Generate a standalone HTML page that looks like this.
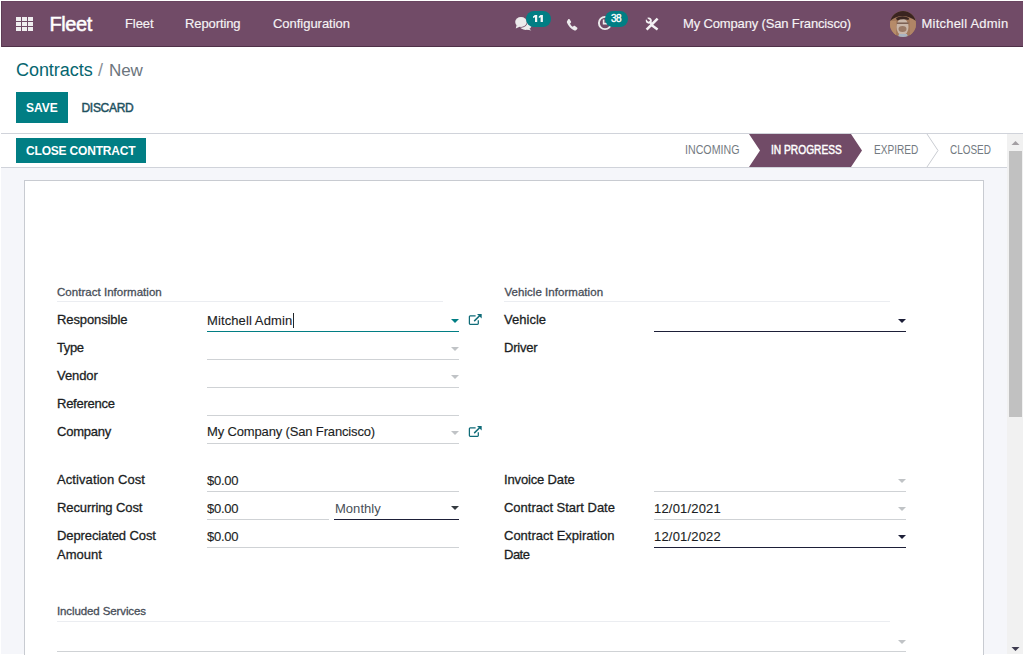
<!DOCTYPE html>
<html><head><meta charset="utf-8"><style>
html,body{margin:0;padding:0;}
body{width:1024px;height:655px;overflow:hidden;position:relative;background:#fff;font-family:"Liberation Sans", sans-serif;}
</style></head><body>
<div style="position:absolute;left:1px;top:1px;width:1022px;height:46px;background:#714B67;"></div>
<div style="position:absolute;left:1px;top:46px;width:1022px;height:1px;background:#4f3148;"></div>
<div style="position:absolute;left:1px;top:1px;width:1022px;height:1px;background:#6a4460;"></div>
<div style="position:absolute;left:1px;top:1px;width:1px;height:46px;background:#5e3d56;"></div>
<div style="position:absolute;left:16px;top:17px;width:5px;height:4px;background:#f0eef0;"></div>
<div style="position:absolute;left:16px;top:22px;width:5px;height:4px;background:#f0eef0;"></div>
<div style="position:absolute;left:16px;top:27px;width:5px;height:4px;background:#f0eef0;"></div>
<div style="position:absolute;left:22px;top:17px;width:5px;height:4px;background:#f0eef0;"></div>
<div style="position:absolute;left:22px;top:22px;width:5px;height:4px;background:#f0eef0;"></div>
<div style="position:absolute;left:22px;top:27px;width:5px;height:4px;background:#f0eef0;"></div>
<div style="position:absolute;left:28px;top:17px;width:5px;height:4px;background:#f0eef0;"></div>
<div style="position:absolute;left:28px;top:22px;width:5px;height:4px;background:#f0eef0;"></div>
<div style="position:absolute;left:28px;top:27px;width:5px;height:4px;background:#f0eef0;"></div>
<div style="position:absolute;left:49.5px;top:13.67px;font-size:20px;line-height:20px;color:#fff;font-weight:normal;letter-spacing:-0.4px;white-space:nowrap;-webkit-text-stroke:0.5px #fff;">Fleet</div>
<div style="position:absolute;left:125px;top:17.00px;font-size:13px;line-height:13px;color:#f6f3f5;font-weight:normal;letter-spacing:-0.1px;white-space:nowrap;-webkit-text-stroke:0.15px currentColor;">Fleet</div>
<div style="position:absolute;left:185px;top:17.00px;font-size:13px;line-height:13px;color:#f6f3f5;font-weight:normal;letter-spacing:-0.1px;white-space:nowrap;-webkit-text-stroke:0.15px currentColor;">Reporting</div>
<div style="position:absolute;left:273px;top:17.00px;font-size:13px;line-height:13px;color:#f6f3f5;font-weight:normal;letter-spacing:-0.03px;white-space:nowrap;-webkit-text-stroke:0.15px currentColor;">Configuration</div>
<div style="position:absolute;left:683px;top:17.00px;font-size:13px;line-height:13px;color:#f6f3f5;font-weight:normal;letter-spacing:-0.15px;white-space:nowrap;-webkit-text-stroke:0.15px currentColor;">My Company (San Francisco)</div>
<div style="position:absolute;left:921.5px;top:17.00px;font-size:13px;line-height:13px;color:#f6f3f5;font-weight:normal;letter-spacing:0.22px;white-space:nowrap;-webkit-text-stroke:0.15px currentColor;">Mitchell Admin</div>
<svg style="position:absolute;left:514px;top:16px" width="18" height="15" viewBox="0 0 18 15">
<ellipse cx="11.6" cy="10.3" rx="5.6" ry="3.6" fill="#ecebec"/>
<polygon points="14.5,12 17.3,14.6 12.5,13.6" fill="#ecebec"/>
<ellipse cx="7" cy="6" rx="6.6" ry="5.8" fill="#714B67"/>
<ellipse cx="7" cy="6" rx="5.8" ry="5" fill="#ecebec"/>
<polygon points="2.6,9 1.8,12.6 6.2,10.6" fill="#ecebec"/>
</svg>
<div style="position:absolute;left:526px;top:11px;width:25px;height:16px;background:#017e84;border-radius:8px;"></div>
<svg style="position:absolute;left:532px;top:14px" width="12" height="9" viewBox="0 0 12 9">
<polygon points="2.9,1 5.2,1 5.2,8 3,8 3,3.3 1,3.9 1,2.6" fill="#f4f8f8"/>
<polygon points="8.5,1 10.9,1 10.9,8 8.6,8 8.6,3.3 6.8,3.9 6.8,2.6" fill="#f4f8f8"/>
</svg>
<svg style="position:absolute;left:566px;top:17.5px" width="13" height="13" viewBox="0 0 13 13">
<path d="M2.2 1.2c.5-.4 1.2-.3 1.5.2l1.3 2c.3.5.2 1.1-.2 1.4l-.8.6c.5 1.3 1.6 2.6 2.9 3.4l.7-.7c.4-.4 1-.4 1.4-.1l2 1.4c.5.3.6 1 .2 1.5l-.9 1c-.6.6-1.5.8-2.3.4C5 10.8 2.3 8 1 4.7.7 3.9.9 3 1.5 2.4z" fill="#ecebec"/>
</svg>
<svg style="position:absolute;left:597px;top:15px" width="16" height="16" viewBox="0 0 16 16">
<circle cx="8" cy="8" r="6.1" fill="none" stroke="#ecebec" stroke-width="1.9"/>
<path d="M6.6 4.6V8.6H10.5" fill="none" stroke="#ecebec" stroke-width="1.6"/>
</svg>
<div style="position:absolute;left:605px;top:11px;width:23px;height:16px;background:#017e84;border-radius:8px;"></div>
<div style="position:absolute;left:611px;top:13.54px;font-size:10px;line-height:10px;color:#fff;font-weight:normal;letter-spacing:-0.5px;white-space:nowrap;-webkit-text-stroke:0.35px #fff;">38</div>
<svg style="position:absolute;left:644px;top:16px" width="16" height="16" viewBox="0 0 16 16">
<path d="M2.6 13.6L13.6 2.6" stroke="#f4f2f4" stroke-width="2.5"/>
<path d="M7.5 9L13.6 13.4" stroke="#f4f2f4" stroke-width="2.5"/>
<circle cx="4.8" cy="4.6" r="2.1" fill="none" stroke="#f4f2f4" stroke-width="1.9"/>
<path d="M2.2 2.2L4.6 4.6" stroke="#714B67" stroke-width="1.8"/>
<path d="M5.5 5.6L8.5 9" stroke="#f4f2f4" stroke-width="2.2"/>
</svg>
<svg style="position:absolute;left:890px;top:11px" width="26" height="26" viewBox="0 0 26 26">
<defs><clipPath id="av"><circle cx="13" cy="13" r="13"/></clipPath></defs>
<g clip-path="url(#av)">
<rect width="26" height="26" fill="#a47a5c"/>
<rect x="0" y="10" width="6" height="16" fill="#b68b69"/>
<rect x="20" y="8" width="6" height="18" fill="#b08566"/>
<path d="M0 0H26V10Q19 5 12.5 5Q6 5 0 10z" fill="#3a2420"/>
<ellipse cx="12.5" cy="16" rx="6" ry="8.5" fill="#c9b6a8"/>
<path d="M6 7Q12.5 3.5 19 7L18.5 9Q12.5 7.5 7 9.5z" fill="#3a2622"/>
<rect x="7" y="11.5" width="11.5" height="1.4" fill="#74584b"/>
<ellipse cx="12.5" cy="18" rx="4" ry="3" fill="#9a7a66"/>
<path d="M9 23H17L18 26H8z" fill="#a9b4c2"/>
</g></svg>
<div style="position:absolute;left:16px;top:60.76px;font-size:18px;line-height:18px;color:#06666f;font-weight:normal;letter-spacing:-0.05px;white-space:nowrap;">Contracts</div>
<div style="position:absolute;left:98px;top:60.76px;font-size:18px;line-height:18px;color:#8a9096;font-weight:normal;letter-spacing:0px;white-space:nowrap;">/</div>
<div style="position:absolute;left:109px;top:61.61px;font-size:17px;line-height:17px;color:#6c757d;font-weight:normal;letter-spacing:-0.15px;white-space:nowrap;">New</div>
<div style="position:absolute;left:16px;top:92px;width:52px;height:31px;background:#017e84;"></div>
<div style="position:absolute;left:26px;top:101.84px;font-size:12px;line-height:12px;color:#fff;font-weight:bold;letter-spacing:0px;white-space:nowrap;">SAVE</div>
<div style="position:absolute;left:81.5px;top:101.84px;font-size:12px;line-height:12px;color:#1e5160;font-weight:normal;letter-spacing:-0.3px;white-space:nowrap;-webkit-text-stroke:0.45px currentColor;">DISCARD</div>
<div style="position:absolute;left:1px;top:133px;width:1022px;height:1px;background:#d0d3da;"></div>
<div style="position:absolute;left:1px;top:167px;width:1006px;height:1px;background:#d0d3da;"></div>
<div style="position:absolute;left:16px;top:138px;width:130px;height:25px;background:#017e84;"></div>
<div style="position:absolute;left:26px;top:144.84px;font-size:12px;line-height:12px;color:#fff;font-weight:bold;letter-spacing:-0.18px;white-space:nowrap;">CLOSE CONTRACT</div>
<svg style="position:absolute;left:740px;top:134px" width="270" height="33" viewBox="0 0 270 33">
<polygon points="9,0 111,0 122,16.5 111,33 9,33 20,16.5" fill="#714B67"/>
<polyline points="187,0 198,16.5 187,33" fill="none" stroke="#c9ccd2" stroke-width="1"/>
</svg>
<div style="position:absolute;left:685px;top:143.84px;font-size:12px;line-height:12px;color:#737a81;font-weight:normal;letter-spacing:0px;white-space:nowrap;transform:scaleX(0.888);transform-origin:0 0;">INCOMING</div>
<div style="position:absolute;left:770.5px;top:143.84px;font-size:12px;line-height:12px;color:#fff;font-weight:normal;letter-spacing:0px;white-space:nowrap;-webkit-text-stroke:0.45px #fff;transform:scaleX(0.85);transform-origin:0 0;">IN PROGRESS</div>
<div style="position:absolute;left:873.5px;top:143.84px;font-size:12px;line-height:12px;color:#737a81;font-weight:normal;letter-spacing:0px;white-space:nowrap;transform:scaleX(0.84);transform-origin:0 0;">EXPIRED</div>
<div style="position:absolute;left:949.5px;top:143.84px;font-size:12px;line-height:12px;color:#737a81;font-weight:normal;letter-spacing:0px;white-space:nowrap;transform:scaleX(0.83);transform-origin:0 0;">CLOSED</div>
<div style="position:absolute;left:1px;top:168px;width:1006px;height:486px;background:#f5f6fa;"></div>
<div style="position:absolute;left:1007px;top:134px;width:16px;height:520px;background:#f1f1f1;"></div>
<div style="position:absolute;left:1009px;top:151px;width:13px;height:266px;background:#c1c1c1;"></div>
<svg style="position:absolute;left:1008px;top:134px" width="15" height="17"><polygon points="3.5,11 7.5,7 11.5,11" fill="#a39fa3"/></svg>
<svg style="position:absolute;left:1008px;top:641px" width="15" height="13"><polygon points="3.5,6 11.5,6 7.5,10" fill="#3d3b4f"/></svg>
<div style="position:absolute;left:24px;top:180px;width:958px;height:480px;background:#fff;border:1px solid #c8cbd1;"></div>
<div style="position:absolute;left:57px;top:301px;width:386px;height:1px;background:#ebedf1;"></div>
<div style="position:absolute;left:504px;top:301px;width:386px;height:1px;background:#ebedf1;"></div>
<div style="position:absolute;left:57px;top:621px;width:833px;height:1px;background:#ebedf1;"></div>
<div style="position:absolute;left:57px;top:286.57px;font-size:11.5px;line-height:11.5px;color:#484e58;font-weight:normal;letter-spacing:0.03px;white-space:nowrap;-webkit-text-stroke:0.3px currentColor;">Contract Information</div>
<div style="position:absolute;left:504.5px;top:286.57px;font-size:11.5px;line-height:11.5px;color:#484e58;font-weight:normal;letter-spacing:0.04px;white-space:nowrap;-webkit-text-stroke:0.3px currentColor;">Vehicle Information</div>
<div style="position:absolute;left:57px;top:605.57px;font-size:11.5px;line-height:11.5px;color:#484e58;font-weight:normal;letter-spacing:-0.11px;white-space:nowrap;-webkit-text-stroke:0.3px currentColor;">Included Services</div>
<div style="position:absolute;left:57px;top:313.00px;font-size:13px;line-height:13px;color:#1b1e23;font-weight:normal;letter-spacing:-0.11px;white-space:nowrap;-webkit-text-stroke:0.28px currentColor;">Responsible</div>
<div style="position:absolute;left:57px;top:341.00px;font-size:13px;line-height:13px;color:#1b1e23;font-weight:normal;letter-spacing:-0.38px;white-space:nowrap;-webkit-text-stroke:0.28px currentColor;">Type</div>
<div style="position:absolute;left:57px;top:369.00px;font-size:13px;line-height:13px;color:#1b1e23;font-weight:normal;letter-spacing:-0.07px;white-space:nowrap;-webkit-text-stroke:0.28px currentColor;">Vendor</div>
<div style="position:absolute;left:57px;top:397.00px;font-size:13px;line-height:13px;color:#1b1e23;font-weight:normal;letter-spacing:-0.25px;white-space:nowrap;-webkit-text-stroke:0.28px currentColor;">Reference</div>
<div style="position:absolute;left:57px;top:425.00px;font-size:13px;line-height:13px;color:#1b1e23;font-weight:normal;letter-spacing:-0.22px;white-space:nowrap;-webkit-text-stroke:0.28px currentColor;">Company</div>
<div style="position:absolute;left:504px;top:313.00px;font-size:13px;line-height:13px;color:#1b1e23;font-weight:normal;letter-spacing:0.02px;white-space:nowrap;-webkit-text-stroke:0.28px currentColor;">Vehicle</div>
<div style="position:absolute;left:504px;top:341.00px;font-size:13px;line-height:13px;color:#1b1e23;font-weight:normal;letter-spacing:-0.23px;white-space:nowrap;-webkit-text-stroke:0.28px currentColor;">Driver</div>
<div style="position:absolute;left:57px;top:473.00px;font-size:13px;line-height:13px;color:#1b1e23;font-weight:normal;letter-spacing:0.09px;white-space:nowrap;-webkit-text-stroke:0.28px currentColor;">Activation Cost</div>
<div style="position:absolute;left:57px;top:501.00px;font-size:13px;line-height:13px;color:#1b1e23;font-weight:normal;letter-spacing:-0.1px;white-space:nowrap;-webkit-text-stroke:0.28px currentColor;">Recurring Cost</div>
<div style="position:absolute;left:57px;top:529.00px;font-size:13px;line-height:13px;color:#1b1e23;font-weight:normal;letter-spacing:-0.1px;white-space:nowrap;-webkit-text-stroke:0.28px currentColor;">Depreciated Cost</div>
<div style="position:absolute;left:57px;top:547.50px;font-size:13px;line-height:13px;color:#1b1e23;font-weight:normal;letter-spacing:0.03px;white-space:nowrap;-webkit-text-stroke:0.28px currentColor;">Amount</div>
<div style="position:absolute;left:504px;top:473.00px;font-size:13px;line-height:13px;color:#1b1e23;font-weight:normal;letter-spacing:-0.15px;white-space:nowrap;-webkit-text-stroke:0.28px currentColor;">Invoice Date</div>
<div style="position:absolute;left:504px;top:501.00px;font-size:13px;line-height:13px;color:#1b1e23;font-weight:normal;letter-spacing:-0.02px;white-space:nowrap;-webkit-text-stroke:0.28px currentColor;">Contract Start Date</div>
<div style="position:absolute;left:504px;top:529.00px;font-size:13px;line-height:13px;color:#1b1e23;font-weight:normal;letter-spacing:-0.01px;white-space:nowrap;-webkit-text-stroke:0.28px currentColor;">Contract Expiration</div>
<div style="position:absolute;left:504px;top:547.50px;font-size:13px;line-height:13px;color:#1b1e23;font-weight:normal;letter-spacing:-0.5px;white-space:nowrap;-webkit-text-stroke:0.28px currentColor;">Date</div>
<div style="position:absolute;left:207px;top:331px;width:252px;height:1px;background:#017e84;"></div>
<svg style="position:absolute;left:451px;top:319px" width="8" height="4"><polygon points="0,0 8,0 4,4" fill="#017e84"/></svg>
<svg style="position:absolute;left:468px;top:314px" width="14" height="12" viewBox="0 0 14 12">
<path d="M7.6 1.9H2.2Q1.4 1.9 1.4 2.7V9.5Q1.4 10.3 2.2 10.3H9.5Q10.3 10.3 10.3 9.5V6.2" fill="none" stroke="#0f6b78" stroke-width="1.25"/>
<path d="M6.2 7.1L11.6 1.7" stroke="#0f6b78" stroke-width="1.5"/><polygon points="9,0.1 13.7,0.1 13.7,4.6" fill="#0f6b78"/>
</svg>
<div style="position:absolute;left:207px;top:314.00px;font-size:13px;line-height:13px;color:#1b1e23;font-weight:normal;letter-spacing:0.1px;white-space:nowrap;-webkit-text-stroke:0.12px currentColor;">Mitchell Admin</div>
<div style="position:absolute;left:293px;top:313px;width:1px;height:15px;background:#212529;"></div>
<div style="position:absolute;left:207px;top:359px;width:252px;height:1px;background:#cfd2d5;"></div>
<svg style="position:absolute;left:451px;top:347px" width="8" height="4"><polygon points="0,0 8,0 4,4" fill="#c0c3c6"/></svg>
<div style="position:absolute;left:207px;top:387px;width:252px;height:1px;background:#cfd2d5;"></div>
<svg style="position:absolute;left:451px;top:375px" width="8" height="4"><polygon points="0,0 8,0 4,4" fill="#c0c3c6"/></svg>
<div style="position:absolute;left:207px;top:415px;width:252px;height:1px;background:#cfd2d5;"></div>
<div style="position:absolute;left:207px;top:443px;width:252px;height:1px;background:#cfd2d5;"></div>
<svg style="position:absolute;left:451px;top:431px" width="8" height="4"><polygon points="0,0 8,0 4,4" fill="#c0c3c6"/></svg>
<svg style="position:absolute;left:468px;top:426px" width="14" height="12" viewBox="0 0 14 12">
<path d="M7.6 1.9H2.2Q1.4 1.9 1.4 2.7V9.5Q1.4 10.3 2.2 10.3H9.5Q10.3 10.3 10.3 9.5V6.2" fill="none" stroke="#0f6b78" stroke-width="1.25"/>
<path d="M6.2 7.1L11.6 1.7" stroke="#0f6b78" stroke-width="1.5"/><polygon points="9,0.1 13.7,0.1 13.7,4.6" fill="#0f6b78"/>
</svg>
<div style="position:absolute;left:207px;top:425.00px;font-size:13px;line-height:13px;color:#1b1e23;font-weight:normal;letter-spacing:-0.15px;white-space:nowrap;-webkit-text-stroke:0.12px currentColor;">My Company (San Francisco)</div>
<div style="position:absolute;left:654px;top:331px;width:252px;height:1px;background:#1d1f38;"></div>
<svg style="position:absolute;left:898px;top:319px" width="8" height="4"><polygon points="0,0 8,0 4,4" fill="#1d1f38"/></svg>
<div style="position:absolute;left:207px;top:491px;width:252px;height:1px;background:#cfd2d5;"></div>
<div style="position:absolute;left:207px;top:474.00px;font-size:13px;line-height:13px;color:#1b1e23;font-weight:normal;letter-spacing:-0.25px;white-space:nowrap;-webkit-text-stroke:0.12px currentColor;">$0.00</div>
<div style="position:absolute;left:207px;top:519px;width:122px;height:1px;background:#cfd2d5;"></div>
<div style="position:absolute;left:207px;top:502.00px;font-size:13px;line-height:13px;color:#1b1e23;font-weight:normal;letter-spacing:-0.25px;white-space:nowrap;-webkit-text-stroke:0.12px currentColor;">$0.00</div>
<div style="position:absolute;left:334px;top:519px;width:125px;height:1px;background:#1d1f38;"></div>
<svg style="position:absolute;left:451px;top:506px" width="8" height="4"><polygon points="0,0 8,0 4,4" fill="#343a40"/></svg>
<div style="position:absolute;left:335px;top:502.00px;font-size:13px;line-height:13px;color:#495057;font-weight:normal;letter-spacing:0.03px;white-space:nowrap;">Monthly</div>
<div style="position:absolute;left:207px;top:547px;width:252px;height:1px;background:#cfd2d5;"></div>
<div style="position:absolute;left:207px;top:530.00px;font-size:13px;line-height:13px;color:#1b1e23;font-weight:normal;letter-spacing:-0.25px;white-space:nowrap;-webkit-text-stroke:0.12px currentColor;">$0.00</div>
<div style="position:absolute;left:654px;top:491px;width:252px;height:1px;background:#cfd2d5;"></div>
<svg style="position:absolute;left:898px;top:479px" width="8" height="4"><polygon points="0,0 8,0 4,4" fill="#c0c3c6"/></svg>
<div style="position:absolute;left:654px;top:519px;width:252px;height:1px;background:#cfd2d5;"></div>
<svg style="position:absolute;left:898px;top:507px" width="8" height="4"><polygon points="0,0 8,0 4,4" fill="#c0c3c6"/></svg>
<div style="position:absolute;left:654px;top:502.00px;font-size:13px;line-height:13px;color:#1b1e23;font-weight:normal;letter-spacing:0.19px;white-space:nowrap;-webkit-text-stroke:0.12px currentColor;">12/01/2021</div>
<div style="position:absolute;left:654px;top:547px;width:252px;height:1px;background:#1d1f38;"></div>
<svg style="position:absolute;left:898px;top:535px" width="8" height="4"><polygon points="0,0 8,0 4,4" fill="#1d1f38"/></svg>
<div style="position:absolute;left:654px;top:530.00px;font-size:13px;line-height:13px;color:#1b1e23;font-weight:normal;letter-spacing:0.19px;white-space:nowrap;-webkit-text-stroke:0.12px currentColor;">12/01/2022</div>
<div style="position:absolute;left:57px;top:651px;width:849px;height:1px;background:#cfd2d5;"></div>
<svg style="position:absolute;left:898px;top:640px" width="8" height="4"><polygon points="0,0 8,0 4,4" fill="#c0c3c6"/></svg>
</body></html>
